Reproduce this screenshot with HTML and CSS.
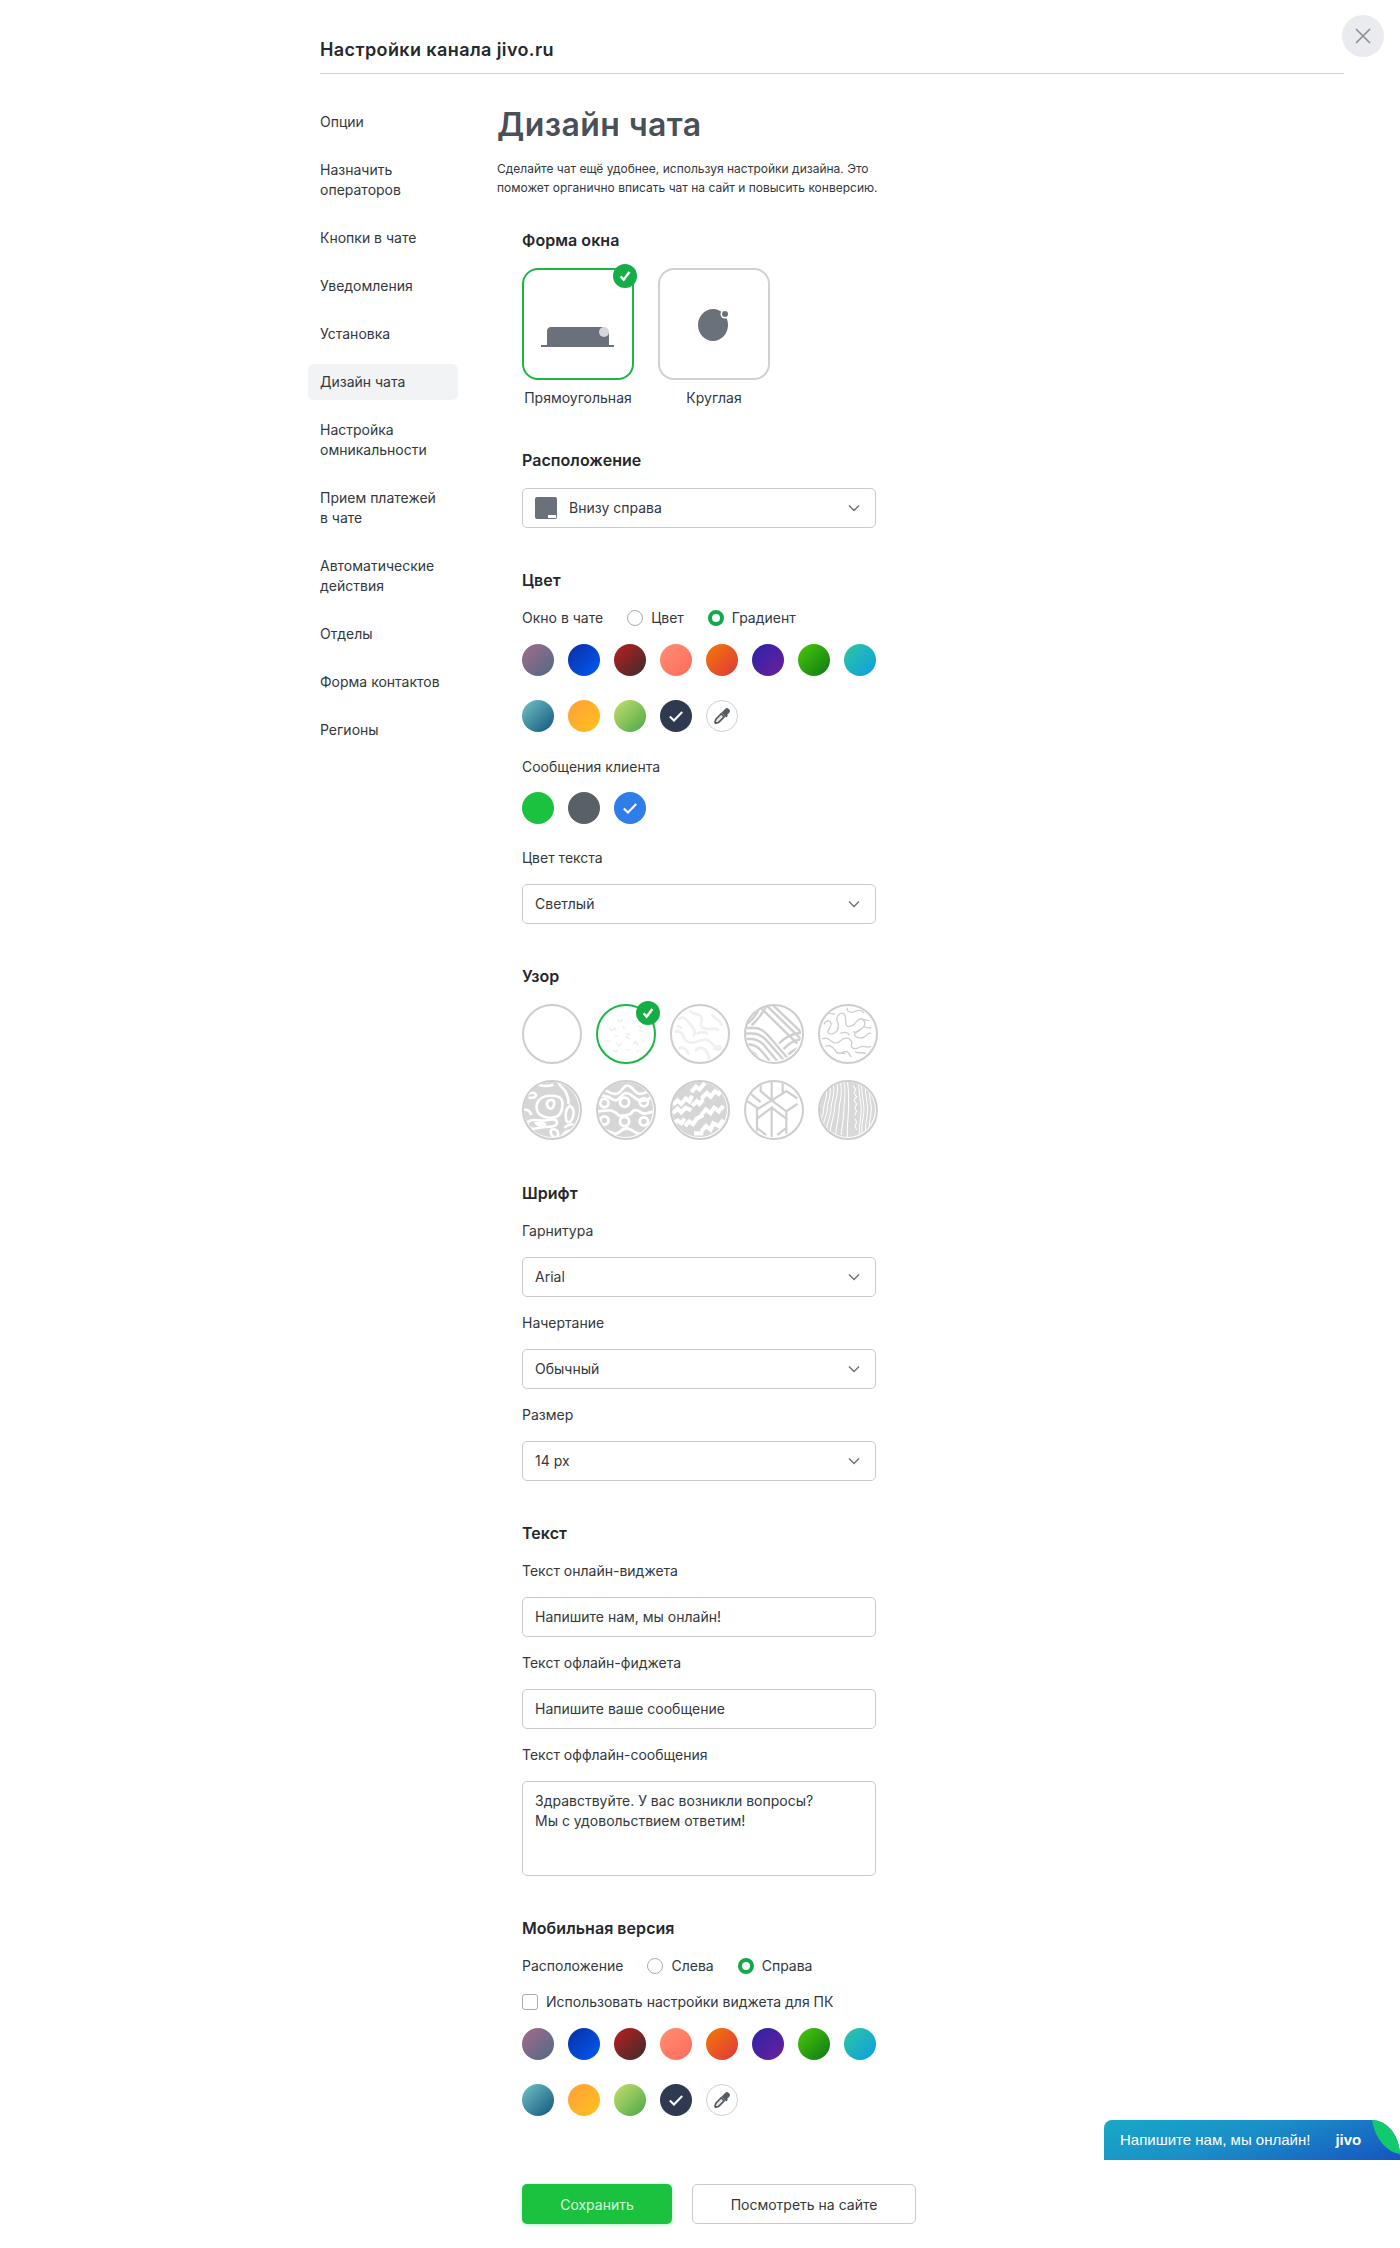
FILE: index.html
```html
<!DOCTYPE html>
<html lang="ru">
<head>
    <meta charset="UTF-8">
    <title>Настройки канала jivo.ru</title>
    <link rel="stylesheet" href="styles.css">
</head>
<body>

<svg class="defs" width="0" height="0">
    <symbol id="check" viewBox="0 0 16 16">
        <path d="M2.500 8.500l3.700 3.500L13.500 4.500" fill="none" stroke="#fff" stroke-width="1.800"/>
    </symbol>
    <symbol id="check-bold" viewBox="0 0 16 16">
        <path d="M3 8.500l3.500 3.700L13 3.500" fill="none" stroke="#fff" stroke-width="2.800"/>
    </symbol>
    <symbol id="dropper" viewBox="0 0 16 16">
        <path d="M9 3.500l2-2c.8-.8 2-.8 2.700 0l.8.8c.8.8.8 2 0 2.700l-2 2 .8.8-1.500 1.500-4.300-4.300 1.500-1.500z" fill="#565b62"/>
        <path d="M7.300 6l2.700 2.700-4.800 4.800-2.600.9-.9-.9.900-2.600z" fill="#e6e7e8" stroke="#565b62" stroke-width="1.500"/>
    </symbol>
    <symbol id="chevron" viewBox="0 0 12 8">
        <path d="M1 1.500l5 5 5-5" fill="none" stroke="#6b7078" stroke-width="1.400"/>
    </symbol>
</svg>

<div class="page">
    <header class="top">
        <h2>Настройки канала jivo.ru</h2>
    </header>
    <button class="close">
        <svg width="16" height="16" viewBox="0 0 16 16"><path d="M1 1l14 14M15 1L1 15" stroke="#8b8e9a" stroke-width="1.600"/></svg>
    </button>

    <div class="layout">
        <nav class="side">
            <a>Опции</a>
            <a>Назначить<br>операторов</a>
            <a>Кнопки в чате</a>
            <a>Уведомления</a>
            <a>Установка</a>
            <a class="active">Дизайн чата</a>
            <a>Настройка<br>омникальности</a>
            <a>Прием платежей<br>в чате</a>
            <a>Автоматические<br>действия</a>
            <a>Отделы</a>
            <a>Форма контактов</a>
            <a>Регионы</a>
        </nav>

        <main class="main">
            <h1>Дизайн чата</h1>
            <p class="lead">Сделайте чат ещё удобнее, используя настройки дизайна. Это<br>поможет органично вписать чат на сайт и повысить конверсию.</p>

            <div class="form">
                <section>
                    <h3>Форма окна</h3>
                    <div class="shapes">
                        <div class="shape">
                            <div class="shape-box selected">
                                <svg width="112" height="112" viewBox="0 0 112 112">
                                    <path d="M25 78V63c0-2 1.500-4 4-4h52l6 6v13z" fill="#6b717a"/>
                                    <rect x="19" y="77" width="73" height="2" fill="#6b717a"/>
                                    <circle cx="82" cy="64" r="5" fill="#d5d7da"/>
                                </svg>
                                <span class="badge"><svg width="14" height="14"><use href="#check-bold"/></svg></span>
                            </div>
                            <span>Прямоугольная</span>
                        </div>
                        <div class="shape">
                            <div class="shape-box">
                                <svg width="112" height="112" viewBox="0 0 112 112">
                                    <ellipse cx="55" cy="57" rx="15" ry="16" fill="#6b717a"/>
                                    <circle cx="67" cy="46" r="4.500" fill="#fff"/>
                                    <circle cx="67" cy="46" r="3" fill="#6b717a"/>
                                </svg>
                            </div>
                            <span>Круглая</span>
                        </div>
                    </div>
                </section>

                <section>
                    <h3>Расположение</h3>
                    <div class="select">
                        <span class="pos-icon"></span>
                        <span>Внизу справа</span>
                        <svg class="chev" width="12" height="8"><use href="#chevron"/></svg>
                    </div>
                </section>

                <section>
                    <h3>Цвет</h3>
                    <div class="radios">
                        <span>Окно в чате</span>
                        <label><i class="radio"></i>Цвет</label>
                        <label><i class="radio on"></i>Градиент</label>
                    </div>
                    <div class="swatches">
                        <span class="sw g1"></span><span class="sw g2"></span><span class="sw g3"></span><span class="sw g4"></span>
                        <span class="sw g5"></span><span class="sw g6"></span><span class="sw g7"></span><span class="sw g8"></span>
                        <span class="sw g9"></span><span class="sw g10"></span><span class="sw g11"></span>
                        <span class="sw g12"><svg width="18" height="18"><use href="#check"/></svg></span>
                        <span class="sw picker"><svg width="18" height="18"><use href="#dropper"/></svg></span>
                    </div>
                    <div class="sub">Сообщения клиента</div>
                    <div class="swatches small">
                        <span class="sw c1"></span><span class="sw c2"></span>
                        <span class="sw c3"><svg width="18" height="18"><use href="#check"/></svg></span>
                    </div>
                    <div class="field text-color">
                        <label>Цвет текста</label>
                        <div class="select"><span>Светлый</span><svg class="chev" width="12" height="8"><use href="#chevron"/></svg></div>
                    </div>
                </section>

                <section>
                    <h3>Узор</h3>
                    <div class="patterns">
                        <div class="pat"></div>
                        <div class="pat selected">
                            <svg viewBox="0 0 60 60" fill="none" stroke="#ececec" stroke-width="1.300">
                                <path d="M22 14c1 4 4 4 5 0M38 15c1 3 3 3 4 0M12 24l3 3 3-3 2 3M27 22l2 3M44 22l4 1-3 4 4 1M18 33h4M30 30l4 1-3 3 4 2M8 38c3 1 4-1 6 1M20 40l3 4 3-4M38 42l3-3 3 4M48 36l2 3M16 48c2 2 4 2 5 0M30 48h5M42 50l3-2"/>
                            </svg>
                            <span class="badge"><svg width="14" height="14"><use href="#check-bold"/></svg></span>
                        </div>
                        <div class="pat">
                            <svg viewBox="0 0 60 60" fill="none" stroke="#f0f0f0" stroke-width="3" stroke-linecap="round">
                                <path d="M8 14c5-4 9 2 12 6s6 6 4 12M20 6c4 4 10 2 12 6s-4 8 2 12 12-2 16 2M44 10c2 4 8 4 10 10M4 28c6-2 8 4 10 8s6 4 10 4 10-6 16-2 6 8 12 6M8 46c4-2 8 2 10 6M26 48c4-4 10-2 12 2s4 6 2 8M46 46c2 2 6 2 8 0M28 30c3-2 8-2 10 0M6 22c2 0 3 1 4 2"/>
                            </svg>
                        </div>
                        <div class="pat">
                            <svg viewBox="0 0 60 60" fill="none" stroke="#cfcfcf" stroke-width="2.600">
                                <path d="M26-4l38 36M19-4l43 42M12-2l44 43"/>
                                <path d="M-2 24h11c7 0 11 4 15 8l24 28M-2 30h9c7 0 11 3 15 7l20 23M-2 36h7c7 0 11 3 14 6l15 18M-2 42h5c6 0 10 3 13 6l10 12M0 48c6 0 9 3 12 7l4 5"/>
                                <path d="M2 19C8 14 13 8 16-2M6 21C13 15 18 8 23-1"/>
                                <path d="M36 41c6-7 14-11 26-12M41 47c5-6 12-10 21-11M46 53c4-4 9-7 16-9"/>
                            </svg>
                        </div>
                        <div class="pat">
                            <svg viewBox="0 0 60 60" fill="none" stroke="#cdcdcd" stroke-width="1.400">
                                <path d="M4 20c4-6 8-4 8 0s-6 8-2 10 10-2 10-8-4-8 0-12 8-2 8 4 0 10 6 8 6-8 10-8 6 4 4 8-8 4-10 8 6 6 10 4 4-6 8-4"/>
                                <path d="M30 2c-2 4 4 6 8 4s8-2 10 2M44 14c4 0 6 2 10 2M2 36c4-2 8 0 10 2s6 4 10 0 10-4 12 0-2 6 2 8 8-2 10-2 6 2 10 0M6 44c4-2 8 0 10 4s6 4 10 2 6 2 8 6M38 50c4 2 8 0 12 2M22 30c4-2 8-2 10 2M36 28c4 2 6 0 8-2M10 8c4 0 6 2 6 0M18 52c4-2 8 0 10 0M48 22c2 2 6 2 8 2"/>
                            </svg>
                        </div>
                        <div class="pat gray">
                            <svg viewBox="0 0 60 60" fill="none" stroke="#fff" stroke-width="2.800">
                                <path d="M14 24c2-6 8-9 14-9s14 0 14 9-3 15-13 15-17-5-15-15z"/>
                                <path d="M26 21c3-2 7-2 7 2s-2 7-5 6-4-6-2-8z"/>
                                <path d="M3 14c4-3 9-3 10 0s-5 4-8 3M14 2c6 3 12 3 18 1M38 0c0 5 6 6 8 12s4 8 2 12"/>
                                <path d="M50 26c4 2 5 7 3 13s-6 6-7 2-1-12 4-15z"/>
                                <path d="M4 44c4-5 12-1 18-2s14-3 14 2-6 5-12 5-12 3-15 2-6-3-5-7z"/>
                                <path d="M13 45c4-1 10 0 10 2s-8 1-10-2z"/>
                                <path d="M30 52c3-1 6 0 7 3s-1 6-4 5-5-6-3-8zM44 50c2-2 6-4 10-4M42 58c2-3 6-5 10-5M0 30c4 0 7 2 8 6"/>
                            </svg>
                        </div>
                        <div class="pat gray">
                            <svg viewBox="0 0 60 60" fill="none" stroke="#fff" stroke-width="3">
                                <path d="M-2 6C6 6 10 12 18 13S26 4 32 4s8 9 14 9 10-5 16-3"/>
                                <path d="M-2 32c4 0 10-1 14-1s8 3 10 5 14 0 15-3 6-3 8-1 5 3 9 2 6-2 8-2"/>
                                <path d="M-2 14c5 0 7 1 12 2s6 5 10 4 6-8 11-8 8 6 14 8 10-2 13-3"/>
                                <path d="M-2 52c4 0 10 0 14 2s8 4 12 0 8-4 12-2 6 6 12 4 6-4 10-4"/>
                                <circle cx="7" cy="23" r="4.500"/><circle cx="29" cy="22" r="5"/><circle cx="50" cy="22" r="4.500"/>
                                <circle cx="29" cy="43" r="5"/><circle cx="50" cy="43" r="4.500"/><circle cx="7" cy="42" r="4.500"/>
                            </svg>
                        </div>
                        <div class="pat gray">
                            <svg viewBox="0 0 60 60" fill="none" stroke="#fff" stroke-width="4.500" stroke-miterlimit="8">
                                <path d="M1 25l5-5 4 4 5-6 4 3 3-6"/>
                                <path d="M21 11l5-6 4 3 6-7"/>
                                <path d="M22 26l5-5 3 3 4-5"/>
                                <path d="M32 18l6-6 4 4 5-6 4 3 5-6"/>
                                <path d="M1 34l5-5 4 4 5-5 6 3"/>
                                <path d="M32 36l5-6 5 4 4-6 5 4 5-6"/>
                                <path d="M14 48l5-5 4 3 4-6 7-4"/>
                                <path d="M32 54l5-6 5 4 3-7 6 3 5-7"/>
                                <path d="M24 56h10"/>
                                <path d="M1 45l5-3 4 3 4-5"/>
                            </svg>
                        </div>
                        <div class="pat">
                            <svg viewBox="0 0 60 60" fill="none" stroke="#cfcfcf" stroke-width="2.400">
                                <path d="M28-2v22M40-2v14M16 0v10l12 10 16-10 12 8M0 20l12 8v26M56 24L44 32v26M12 30l16-10M28 20l16 12"/>
                                <path d="M12 40l16-12v34M28 28l16 12M12 50l10 8M44 50l-10 8M4 12l12 10"/>
                            </svg>
                        </div>
                        <div class="pat wood">
                            <svg viewBox="0 0 60 60" fill="none" stroke="#fff" stroke-width="1.100">
                                <path d="M6 6c4 8-2 16-2 24s-5 12-5 18M10 3c4 10-2 18-2 26s-5 14-5 22M14 1c4 10-2 20-2 28s-5 16-5 26M18 0c4 10-2 20-2 28s-5 18-5 30M22 0c4 12-1 20-1 28s-3 18-4 30M26 0c3 12 0 22 0 30s-2 18-3 28M30 0c2 14 1 20 1 30s-2 20-1 30"/>
                                <path d="M36 4l3 4-2 4 3 4-3 4 3 4-2 4 2 4-2 4M38 40l2 4-2 4 2 4"/>
                                <path d="M46 0c-2 12 2 20 2 30s-4 16-2 30M50 0c-2 12 2 20 2 30s-4 16-2 30M54 2c-2 12 2 20 2 28s-4 16-2 28M43 0c-2 12 2 20 2 30s-3 16-2 30"/>
                            </svg>
                        </div>
                    </div>
                </section>

                <section>
                    <h3>Шрифт</h3>
                    <div class="field">
                        <label>Гарнитура</label>
                        <div class="select"><span>Arial</span><svg class="chev" width="12" height="8"><use href="#chevron"/></svg></div>
                    </div>
                    <div class="field">
                        <label>Начертание</label>
                        <div class="select"><span>Обычный</span><svg class="chev" width="12" height="8"><use href="#chevron"/></svg></div>
                    </div>
                    <div class="field">
                        <label>Размер</label>
                        <div class="select"><span>14 px</span><svg class="chev" width="12" height="8"><use href="#chevron"/></svg></div>
                    </div>
                </section>

                <section>
                    <h3>Текст</h3>
                    <div class="field">
                        <label>Текст онлайн-виджета</label>
                        <div class="select">Напишите нам, мы онлайн!</div>
                    </div>
                    <div class="field">
                        <label>Текст офлайн-фиджета</label>
                        <div class="select">Напишите ваше сообщение</div>
                    </div>
                    <div class="field">
                        <label>Текст оффлайн-сообщения</label>
                        <div class="area">Здравствуйте. У вас возникли вопросы?<br>Мы с удовольствием ответим!</div>
                    </div>
                </section>

                <section>
                    <h3>Мобильная версия</h3>
                    <div class="radios">
                        <span>Расположение</span>
                        <label><i class="radio"></i>Слева</label>
                        <label><i class="radio on"></i>Справа</label>
                    </div>
                    <label class="check-row"><i class="box"></i>Использовать настройки виджета для ПК</label>
                    <div class="swatches">
                        <span class="sw g1"></span><span class="sw g2"></span><span class="sw g3"></span><span class="sw g4"></span>
                        <span class="sw g5"></span><span class="sw g6"></span><span class="sw g7"></span><span class="sw g8"></span>
                        <span class="sw g9"></span><span class="sw g10"></span><span class="sw g11"></span>
                        <span class="sw g12"><svg width="18" height="18"><use href="#check"/></svg></span>
                        <span class="sw picker"><svg width="18" height="18"><use href="#dropper"/></svg></span>
                    </div>
                </section>

                <div class="actions">
                    <button class="btn save">Сохранить</button>
                    <button class="btn view">Посмотреть на сайте</button>
                </div>
            </div>
        </main>
    </div>
</div>

<div class="widget">
    <span class="widget-text">Напишите нам, мы онлайн!</span>
    <span class="widget-logo">jivo</span>
    <svg class="leaf" width="28" height="36" viewBox="0 0 28 36"><path d="M0 0h28v34C14 32 3 18 0 0z" fill="#12c96e"/></svg>
</div>

</body>
</html>
```

FILE: styles.css
```css
/* Page */
body {
    margin: 0;
    background: #fff;
    font-family: 'Inter', 'Liberation Sans', sans-serif;
    font-size: 14px;
    line-height: 20px;
    color: #33383d;
    height: 2248px;
    overflow: hidden;
}

.defs {
    position: absolute;
}

.page {
    padding: 0 56px 0 320px;
}

.top {
    height: 73px;
    border-bottom: 1px solid #cfd0d2;
}

.top h2 {
    margin: 0;
    padding-top: 38px;
    font-size: 18px;
    line-height: 24px;
    font-weight: 600;
    letter-spacing: 0.4px;
    color: #25282c;
}

.close {
    position: absolute;
    top: 15px;
    left: 1342px;
    width: 42px;
    height: 42px;
    border: none;
    border-radius: 50%;
    background: #e9ebef;
    display: flex;
    align-items: center;
    justify-content: center;
    padding: 0;
}

.layout {
    display: flex;
    margin-left: -12px;
    gap: 39px;
}

/* Sidebar */
.side {
    width: 150px;
    padding-top: 30px;
}

.side a {
    display: block;
    padding: 8px 12px;
    margin-bottom: 12px;
    border-radius: 6px;
}

.side a.active {
    background: #f1f3f4;
}

/* Main column */
.main {
    flex: 1;
    padding-top: 31px;
}

h1 {
    margin: 0;
    font-size: 32px;
    line-height: 40px;
    font-weight: 600;
    letter-spacing: 0.4px;
    color: #4a5058;
}

.lead {
    margin: 14px 0 0;
    font-size: 12px;
    line-height: 19px;
}

.form {
    padding-left: 25px;
    margin-top: 31px;
}

section {
    margin-bottom: 40px;
}

h3 {
    margin: 0 0 16px;
    font-size: 16px;
    line-height: 24px;
    font-weight: 600;
    letter-spacing: 0.05px;
    color: #25282c;
}

/* Window shape */
.shapes {
    display: flex;
    gap: 24px;
}

.shape {
    width: 112px;
    text-align: center;
}

.shape > span {
    display: block;
    margin-top: 8px;
    white-space: nowrap;
}

.shape-box {
    position: relative;
    width: 112px;
    height: 112px;
    box-sizing: border-box;
    border: 2px solid #cfd0d2;
    border-radius: 16px;
}

.shape-box svg {
    display: block;
    margin: -2px;
}

.shape-box.selected {
    border-color: #1ab744;
}

.badge {
    position: absolute;
    top: -6px;
    right: -5px;
    width: 24px;
    height: 24px;
    border-radius: 50%;
    background: #15ad46;
    display: flex;
    align-items: center;
    justify-content: center;
}

.shape-box .badge svg {
    margin: 0;
}

/* Selects and inputs */
.select {
    display: flex;
    align-items: center;
    position: relative;
    width: 354px;
    height: 40px;
    box-sizing: border-box;
    padding: 0 12px;
    border: 1px solid #c8c9cb;
    border-radius: 5px;
}

.chev {
    position: absolute;
    right: 15px;
    top: 15px;
}

.pos-icon {
    position: relative;
    width: 22px;
    height: 22px;
    margin-right: 12px;
    background: #6b717a;
    border-radius: 2px;
}

.pos-icon::after {
    content: '';
    position: absolute;
    right: 1px;
    bottom: 1px;
    width: 8px;
    height: 3px;
    background: #fff;
}

.area {
    width: 354px;
    height: 95px;
    box-sizing: border-box;
    padding: 9px 12px;
    border: 1px solid #c8c9cb;
    border-radius: 5px;
}

.field {
    margin-bottom: 16px;
}

.field:last-child {
    margin-bottom: 0;
}

.field label {
    display: block;
    margin-bottom: 16px;
}

.text-color {
    margin-top: 24px;
}

/* Radios */
.radios {
    display: flex;
    align-items: center;
    margin-bottom: 16px;
}

.radios label {
    display: flex;
    align-items: center;
    margin-left: 24px;
}

.radio {
    width: 16px;
    height: 16px;
    margin-right: 8px;
    box-sizing: border-box;
    border: 1px solid #a9abaf;
    border-radius: 50%;
}

.radio.on {
    border: 4px solid #13a94b;
}

.check-row {
    display: flex;
    align-items: center;
    margin-bottom: 16px;
}

.box {
    width: 16px;
    height: 16px;
    margin-right: 8px;
    box-sizing: border-box;
    border: 1px solid #a9abaf;
    border-radius: 3px;
}

/* Swatches */
.swatches {
    display: grid;
    grid-template-columns: repeat(8, 32px);
    gap: 24px 14px;
}

.sub {
    margin-top: 25px;
    margin-bottom: 15px;
}

.sw {
    width: 32px;
    height: 32px;
    box-sizing: border-box;
    border-radius: 50%;
    display: flex;
    align-items: center;
    justify-content: center;
}

.g1 { background: linear-gradient(135deg, #a36b8c, #4f6a84); }
.g2 { background: linear-gradient(135deg, #0a2ea4, #005cf5); }
.g3 { background: linear-gradient(135deg, #bd1f1f, #3a2c2c); }
.g4 { background: linear-gradient(135deg, #ff8f72, #ff6a5c); }
.g5 { background: linear-gradient(135deg, #f57a05, #df363f); }
.g6 { background: linear-gradient(135deg, #2a24a8, #6c1f9c); }
.g7 { background: linear-gradient(135deg, #4cc70a, #0b7a14); }
.g8 { background: linear-gradient(135deg, #2ec89e, #0d9ce4); }
.g9 { background: linear-gradient(135deg, #72c4c6, #10547c); }
.g10 { background: linear-gradient(135deg, #ff9f3c, #ffc21a); }
.g11 { background: linear-gradient(135deg, #c8de6c, #48a84a); }
.g12 { background: #2f3a50; }
.c1 { background: #1bc23f; }
.c2 { background: #5a6068; }
.c3 { background: #2f7de8; }

.picker {
    border: 1px solid #cfd0d2;
    background: #fff;
}

/* Patterns */
.patterns {
    display: grid;
    grid-template-columns: repeat(5, 60px);
    gap: 16px 14px;
    margin-bottom: 41px;
}

.pat {
    position: relative;
    width: 60px;
    height: 60px;
    box-sizing: border-box;
    border: 2.5px solid #cdcdcd;
    border-radius: 50%;
    background: #fff;
}

.pat > svg {
    display: block;
    width: 55px;
    height: 55px;
    border-radius: 50%;
}

.pat.gray > svg {
    background: #d6d6d6;
}

.pat.wood > svg {
    background: #d8d8d8;
}

.pat.selected {
    border-color: #1ab744;
}

.pat .badge {
    top: -5px;
    right: -6px;
}

/* Buttons */
.actions {
    display: flex;
    gap: 20px;
    margin-top: 68px;
}

.btn {
    height: 40px;
    box-sizing: border-box;
    border-radius: 5px;
    font-family: inherit;
    font-size: 14px;
    cursor: pointer;
}

.save {
    width: 150px;
    border: none;
    background: #1bc23f;
    color: #d9f7df;
    box-shadow: 0 1px 4px rgba(27, 194, 63, 0.3);
}

.view {
    width: 224px;
    border: 1px solid #c8c9cb;
    background: #fff;
    color: #33383d;
}

/* Chat widget */
.widget {
    position: absolute;
    left: 1104px;
    top: 2120px;
    width: 296px;
    height: 40px;
    display: flex;
    align-items: center;
    border-radius: 8px 28px 0 0 / 8px 36px 0 0;
    background: linear-gradient(160deg, #19a8c6 0%, #1a8fc8 45%, #1554c0 100%);
    color: #fff;
    font-family: 'Liberation Sans', sans-serif;
    overflow: hidden;
}

.widget-text {
    margin-left: 16px;
    font-size: 15px;
}

.widget-logo {
    margin-left: 25px;
    font-size: 15px;
    font-weight: 700;
}

.leaf {
    position: absolute;
    right: 0;
    top: 0;
}
```
